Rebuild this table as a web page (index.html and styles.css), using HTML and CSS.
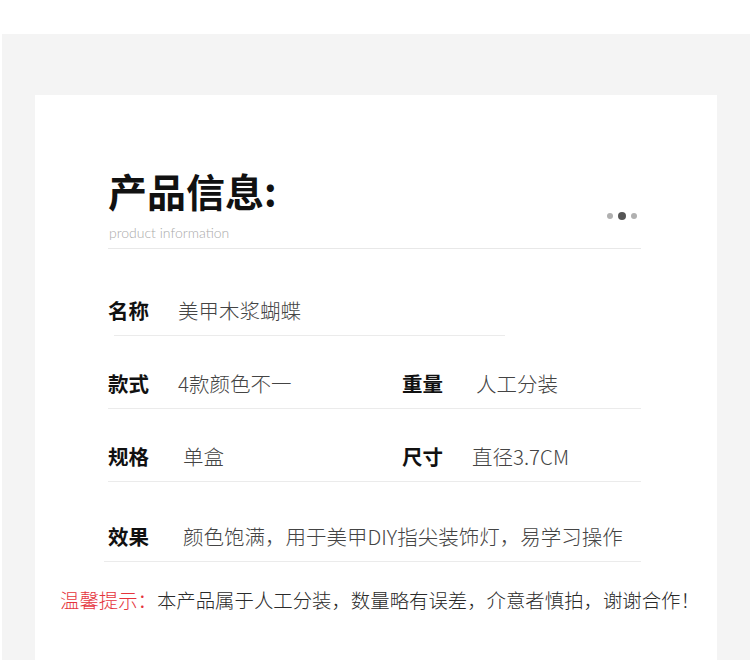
FILE: index.html
```html
<!DOCTYPE html>
<html lang="zh">
<head>
  <meta charset="UTF-8">
  <title>产品信息</title>
  <link rel="stylesheet" href="styles.css">
</head>
<body>

  <div class="page">
    <div class="card">
      <div class="info">

        <div class="head">
          <div>
            <h1 class="title">产品信息:</h1>
            <p class="subtitle">product information</p>
          </div>
          <div class="dots">
            <span class="dot"></span>
            <span class="dot dot-on"></span>
            <span class="dot"></span>
          </div>
        </div>

        <div class="row row-short">
          <div class="pair">
            <span class="label">名称</span>
            <span class="val">美甲木浆蝴蝶</span>
          </div>
        </div>

        <div class="row">
          <div class="pair">
            <span class="label">款式</span>
            <span class="val">4款颜色不一</span>
          </div>
          <div class="pair">
            <span class="label label-wide">重量</span>
            <span class="val">人工分装</span>
          </div>
        </div>

        <div class="row">
          <div class="pair">
            <span class="label">规格</span>
            <span class="val val-in">单盒</span>
          </div>
          <div class="pair">
            <span class="label">尺寸</span>
            <span class="val">直径3.7CM</span>
          </div>
        </div>

        <div class="row row-last">
          <div class="pair">
            <span class="label">效果</span>
            <span class="val val-in">颜色饱满，用于美甲DIY指尖装饰灯，易学习操作</span>
          </div>
        </div>

      </div>

      <p class="tip"><span class="tip-red">温馨提示：</span>本产品属于人工分装，数量略有误差，介意者慎拍，谢谢合作！</p>
    </div>
  </div>

</body>
</html>
```

FILE: styles.css
```css
body {
  margin: 0;
  background: #ffffff;
  font-family: "Noto Sans CJK SC", "Noto Sans", sans-serif;
  color: #222;
  overflow: hidden;
}

.page {
  margin-top: 34px;
  margin-left: 2px;
  background: #f4f4f4;
  padding: 61px 33px 0 33px;
}

.card {
  background: #ffffff;
  min-height: 620px;
  padding-top: 73px;
}

.info {
  margin-left: 73px;
  width: 533px;
}

.head {
  display: flex;
  justify-content: space-between;
  align-items: flex-end;
  border-bottom: 1px solid #e8e8e8;
  padding-bottom: 5px;
}

.title {
  margin: 0;
  font-size: 39px;
  line-height: 44px;
  font-weight: 700;
  color: #111;
}

.subtitle {
  margin: 11px 0 0 1px;
  font-family: Lato, "Open Sans", sans-serif;
  font-weight: 300;
  font-size: 14px;
  line-height: 20px;
  color: #aaaaaa;
}

.dots {
  display: flex;
  align-items: center;
  gap: 5px;
  margin-right: 4px;
  margin-bottom: 23px;
}

.dot {
  width: 6px;
  height: 6px;
  border-radius: 50%;
  background: #b0b0b0;
}

.dot-on {
  width: 8px;
  height: 8px;
  background: #555;
}

.row {
  display: flex;
  padding: 33px 0 11px 0;
  border-bottom: 1px solid #ebebeb;
  font-size: 20.5px;
  line-height: 28px;
}

.row-short {
  margin-top: 14px;
  margin-left: 6px;
  width: 391px;
}

.row-short .pair {
  margin-left: -6px;
}

.row-last {
  padding-top: 40px;
  margin-left: -4px;
  width: 537px;
}

.row-last .pair {
  margin-left: 4px;
}

.pair {
  display: flex;
  flex-shrink: 0;
  width: 294px;
}

.pair + .pair {
  width: auto;
}

.label {
  width: 70px;
  flex-shrink: 0;
  font-weight: 700;
  color: #111;
}

.label-wide {
  width: 74px;
}

.val {
  font-weight: 300;
  color: #444;
  white-space: nowrap;
}

.val-in {
  padding-left: 5px;
}

.tip {
  margin: 24px 0 0 25px;
  font-size: 19.4px;
  font-weight: 300;
  line-height: 28px;
  color: #2a2a2a;
  white-space: nowrap;
}

.tip-red {
  color: #e5343c;
}
```
